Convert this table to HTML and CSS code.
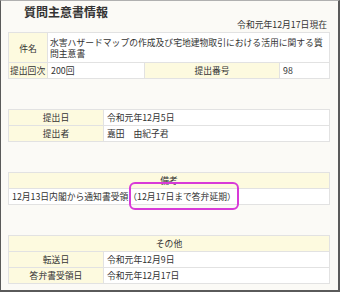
FILE: index.html
```html
<!DOCTYPE html>
<html lang="ja">
<head>
<meta charset="utf-8">
<title>質問主意書情報</title>
<link rel="stylesheet" href="styles.css">
</head>
<body>
<div class="frame">
  <h1 class="title">質問主意書情報</h1>
  <div class="asof">令和元年12月17日現在</div>

  <table class="tbl t1">
    <colgroup><col class="c1"><col class="c2"><col class="c3"><col class="c4"></colgroup>
    <tr class="tall">
      <th class="center">件名</th>
      <td colspan="3">水害ハザードマップの作成及び宅地建物取引における活用に関する質問主意書</td>
    </tr>
    <tr>
      <th class="left">提出回次</th>
      <td>200回</td>
      <th class="center">提出番号</th>
      <td>98</td>
    </tr>
  </table>

  <table class="tbl t2">
    <colgroup><col class="h"><col></colgroup>
    <tr><th class="center">提出日</th><td>令和元年12月5日</td></tr>
    <tr><th class="center">提出者</th><td>嘉田　由紀子君</td></tr>
  </table>

  <table class="tbl t3">
    <tr><th class="center">備考</th></tr>
    <tr><td>12月13日内閣から通知書受領<span class="mark">（12月17日まで答弁延期）</span></td></tr>
  </table>

  <table class="tbl t4">
    <colgroup><col class="h"><col></colgroup>
    <tr><th class="center" colspan="2">その他</th></tr>
    <tr><th class="center">転送日</th><td>令和元年12月9日</td></tr>
    <tr><th class="center">答弁書受領日</th><td>令和元年12月17日</td></tr>
  </table>
</div>
</body>
</html>
```

FILE: styles.css
```css
html, body {
  margin: 0;
  padding: 0;
  background: #fbfaf6;
}

.frame {
  width: 340px;
  height: 292px;
  box-sizing: border-box;
  border-style: solid;
  border-color: #5a5a5a;
  border-top-color: #b0b0b0;
  border-width: 1px 2px 2px 1px;
  background: #fbfaf6;
  padding: 0 8px 0 7px;
  font-family: "Noto Sans CJK JP", "Noto Sans", sans-serif;
  color: #333;
  font-size: 8.8px;
  line-height: 11px;
}

.title {
  margin: 4px 0 0 16px;
  font-size: 12px;
  line-height: 14px;
  font-weight: bold;
  color: #333;
}

.asof {
  text-align: right;
  padding-right: 3px;
  margin-bottom: 2px;
}

.tbl {
  width: 100%;
  table-layout: fixed;
  border-collapse: collapse;
  border: 1px solid #dedede;
  margin-bottom: 30px;
}

.tbl th,
.tbl td {
  border: 1px solid #e2e2e2;
  padding: 2px 3px;
  font-weight: normal;
  vertical-align: middle;
  text-align: left;
  white-space: normal;
}

.tbl th {
  background: #fdfadf;
}

.tbl td {
  background: #ffffff;
}

.tbl th.center {
  text-align: center;
}

.tbl th.left {
  padding-left: 1px;
  padding-right: 0;
}

.t1 .c1 { width: 39px; }
.t1 .c2 { width: 97px; }
.t1 .c3 { width: 135px; }

.t1 .tall td,
.t1 .tall th {
  padding-top: 4px;
  padding-bottom: 3px;
}

.t1 .tall td {
  padding-left: 2px;
  padding-right: 2px;
}

.t2 .h,
.t4 .h {
  width: 95px;
}

.mark {
  position: relative;
}

.mark::after {
  content: "";
  position: absolute;
  left: 1px;
  right: -3px;
  top: -8px;
  bottom: -7px;
  border: 2px solid #d83ad8;
  border-radius: 6px;
}
```
